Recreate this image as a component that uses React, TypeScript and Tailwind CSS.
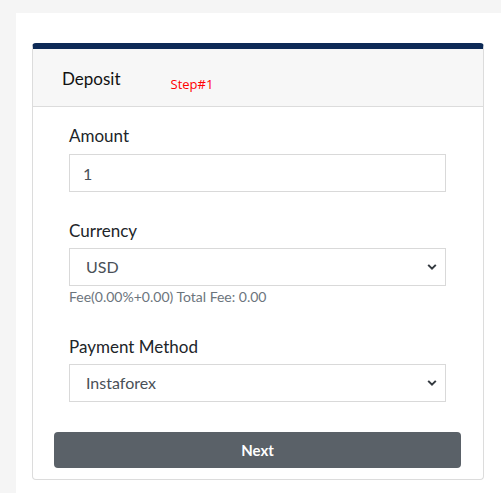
import React, { useState } from 'react';

const Chevron = () => (
  <svg className="pointer-events-none absolute right-[9px] top-1/2 -translate-y-1/2" width="10" height="7" viewBox="0 0 10 7">
    <path d="M1.2 1.4 L5 5.2 L8.8 1.4" fill="none" stroke="#343a40" strokeWidth="2" />
  </svg>
);

const App = () => {
  const [amount, setAmount] = useState('1');
  const [currency, setCurrency] = useState('USD');
  const [method, setMethod] = useState('Instaforex');

  return (
    <div className="min-h-screen w-[501px] h-[493px] overflow-hidden bg-[#f5f5f5] pt-[13px] pl-[16px]" style={{ fontFamily: 'Lato, "Open Sans", sans-serif' }}>
      <div className="w-[520px] h-[600px] bg-white pt-[30px] pl-[16px]">
        <div className="w-[452px] rounded-[4px] border border-[#dcdcdc] border-t-[6px] border-t-[#0d2a56] bg-white">
          {/* Header */}
          <div className="h-[58px] bg-[#f7f7f7] border-b border-[#dcdcdc] flex items-start pl-[29px]">
            <h3 className="text-[17px] text-[#111] mt-[18px] leading-[24px]">Deposit</h3>
            <span className="ml-[50px] mt-[27px] text-[13px] leading-[17px] text-[#ff0000]" style={{ fontFamily: '"Open Sans", sans-serif' }}>Step#1</span>
          </div>

          {/* Body */}
          <div className="pt-[17px] pb-[11px]">
            <div className="px-[36px]">
              <label className="block text-[17px] leading-[24px] text-[#212529] mb-[6px]">Amount</label>
              <input
                value={amount}
                onChange={(e) => setAmount(e.target.value)}
                className="block w-[377px] h-[38px] border border-[#d9d9d9] px-[13px] text-[16px] text-[#495057] outline-none"
              />

              <label className="block text-[17px] leading-[24px] text-[#212529] mt-[27px] mb-[5px]">Currency</label>
              <div className="relative w-[377px]">
                <select
                  value={currency}
                  onChange={(e) => setCurrency(e.target.value)}
                  className="block w-full h-[38px] appearance-none bg-white border border-[#d9d9d9] pl-[16px] text-[16px] text-[#495057] outline-none"
                >
                  <option>USD</option>
                  <option>EUR</option>
                </select>
                <Chevron />
              </div>
              <p className="mt-[2px] text-[14px] leading-[18px] text-[#6c757d]">Fee(0.00%+0.00) Total Fee: 0.00</p>

              <label className="block text-[17px] leading-[24px] text-[#212529] mt-[29px] mb-[5px]">Payment Method</label>
              <div className="relative w-[377px]">
                <select
                  value={method}
                  onChange={(e) => setMethod(e.target.value)}
                  className="block w-full h-[38px] appearance-none bg-white border border-[#d9d9d9] pl-[16px] text-[16px] text-[#495057] outline-none"
                >
                  <option>Instaforex</option>
                  <option>Bank Transfer</option>
                </select>
                <Chevron />
              </div>
            </div>

            <div className="px-[21px] mt-[30px]">
              <button className="w-[407px] h-[36px] rounded-[4px] bg-[#5a6168] text-white text-[15px] font-bold">Next</button>
            </div>
          </div>
        </div>
      </div>
    </div>
  );
};

export default App;
